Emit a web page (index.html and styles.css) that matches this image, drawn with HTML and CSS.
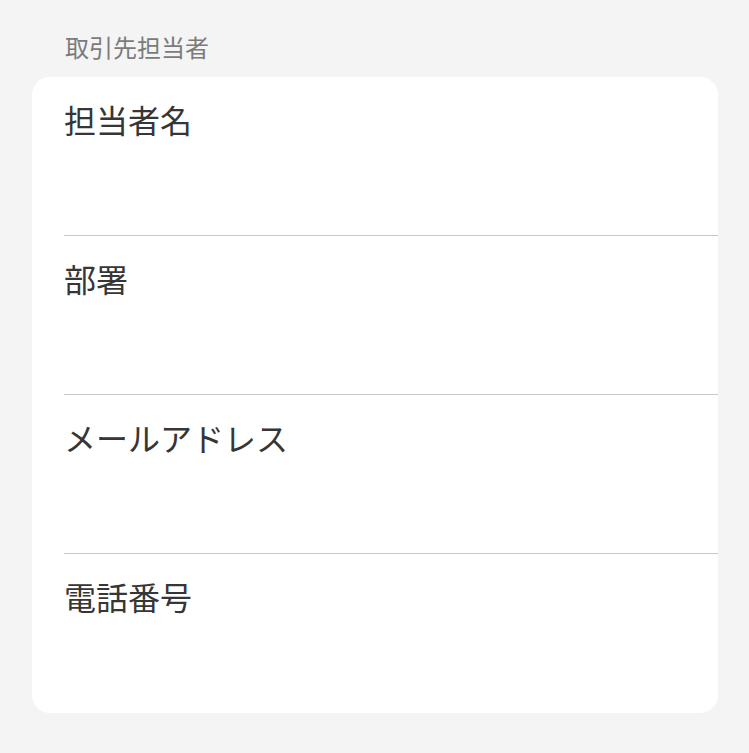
FILE: index.html
```html
<!DOCTYPE html>
<html lang="ja">
<head>
<meta charset="utf-8">
<link rel="stylesheet" href="styles.css">
</head>
<body>
<div class="page">
  <div class="section-title">取引先担当者</div>
  <div class="card">
    <div class="row"><div class="label">担当者名</div></div>
    <div class="row"><div class="label">部署</div></div>
    <div class="row"><div class="label">メールアドレス</div></div>
    <div class="row"><div class="label">電話番号</div></div>
  </div>
</div>
</body>
</html>
```
FILE: styles.css
```css
html, body {
  margin: 0;
  padding: 0;
  background: #f4f4f4;
}
.page {
  padding: 32px 31px 40px 32px;
  font-family: "Noto Sans CJK JP", "Noto Sans", sans-serif;
}
.section-title {
  font-size: 24px;
  line-height: 30px;
  color: #7b7b7b;
  padding-left: 33px;
  margin-bottom: 15px;
}
.card {
  background: #ffffff;
  border-radius: 18px;
  padding-left: 32px;
  overflow: hidden;
}
.row {
  height: 159px;
  box-sizing: border-box;
  padding-top: 24px;
  border-bottom: 1px solid #c8c8c8;
}
.row:last-child {
  border-bottom: none;
}
.label {
  font-size: 32px;
  line-height: 37px;
  color: #363636;
}
```
